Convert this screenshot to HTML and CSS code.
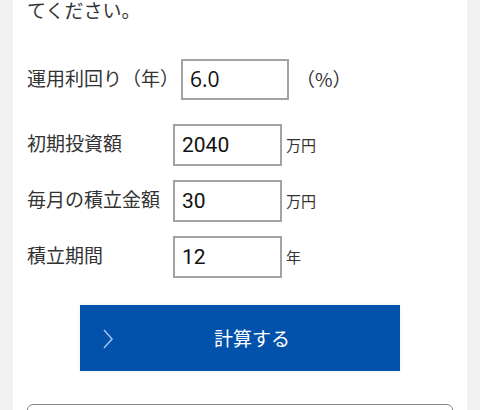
FILE: index.html
```html
<!DOCTYPE html>
<html lang="ja">
<head>
<meta charset="utf-8">
<link rel="stylesheet" href="styles.css">
</head>
<body>
<div class="card">
  <p class="intro">てください。</p>
  <div class="row row-first">
    <label class="label label-wide">運用利回り（年）</label>
    <input class="field" type="text" value="6.0">
    <span class="unit unit-pct">（%）</span>
  </div>
  <div class="rows">
    <div class="row">
      <label class="label">初期投資額</label>
      <input class="field" type="text" value="2040">
      <span class="unit">万円</span>
    </div>
    <div class="row">
      <label class="label">毎月の積立金額</label>
      <input class="field" type="text" value="30">
      <span class="unit">万円</span>
    </div>
    <div class="row">
      <label class="label">積立期間</label>
      <input class="field" type="text" value="12">
      <span class="unit">年</span>
    </div>
  </div>
  <div class="btn-wrap">
    <button class="calc" type="button">
      <svg class="chev" width="12" height="20" viewBox="0 0 12 20"><path d="M2 1 L10 10 L2 19" fill="none" stroke="#9dbfee" stroke-width="1.6"/></svg>
      <span>計算する</span>
    </button>
  </div>
  <div class="result"></div>
</div>
</body>
</html>
```

FILE: styles.css
```css
html, body {
  margin: 0;
  padding: 0;
  background: #f1f1f1;
  overflow: hidden;
}
body {
  font-family: "Noto Sans CJK JP", "Noto Sans", sans-serif;
  color: #333;
  width: 480px;
  height: 410px;
}
.card {
  margin-left: 13px;
  width: 454px;
  height: 410px;
  background: #fff;
  box-sizing: border-box;
  padding: 0 14px;
}
.intro {
  margin: 0;
  font-size: 19px;
  line-height: 19px;
  height: 21px;
}
.row {
  display: flex;
  align-items: center;
  height: 42px;
}
.row-first {
  margin-top: 37px;
}
.rows {
  margin-top: 24px;
  display: flex;
  flex-direction: column;
  gap: 14px;
}
.label {
  width: 146px;
  flex: none;
  font-size: 19px;
  line-height: 28px;
  margin-top: -4px;
}
.label-wide {
  width: 154px;
  margin-top: -2px;
}
.field {
  box-sizing: border-box;
  width: 109px;
  height: 42px;
  border: 2px solid #a3a3a3;
  border-radius: 0;
  padding: 0 0 0 7px;
  margin: 0;
  font-family: Roboto, "Noto Sans", sans-serif;
  font-size: 21px;
  color: #111;
  background: #fff;
  outline: none;
}
.row-first .field {
  width: 108px;
  height: 41px;
  font-family: "Open Sans", "Noto Sans", sans-serif;
}
.unit {
  margin-left: 4px;
  font-size: 15px;
  margin-top: -2px;
}
.unit-pct {
  margin-left: 7px;
  font-size: 19px;
}
.btn-wrap {
  display: flex;
  justify-content: center;
  margin-top: 27px;
}
.calc {
  position: relative;
  width: 320px;
  height: 66px;
  border: 0;
  margin: 0;
  padding: 0 0 0 24px;
  background: #0251aa;
  color: #fff;
  font-family: "Noto Sans CJK JP", "Noto Sans", sans-serif;
  font-size: 19px;
  display: flex;
  align-items: center;
  justify-content: center;
  box-shadow: 0 0 4px rgba(0, 40, 100, 0.08);
}
.calc span {
  margin-top: -2px;
}
.chev {
  position: absolute;
  left: 22px;
  top: 24px;
}
.result {
  margin-top: 33px;
  height: 40px;
  border: 1px solid #888;
  border-radius: 6px;
}
```
